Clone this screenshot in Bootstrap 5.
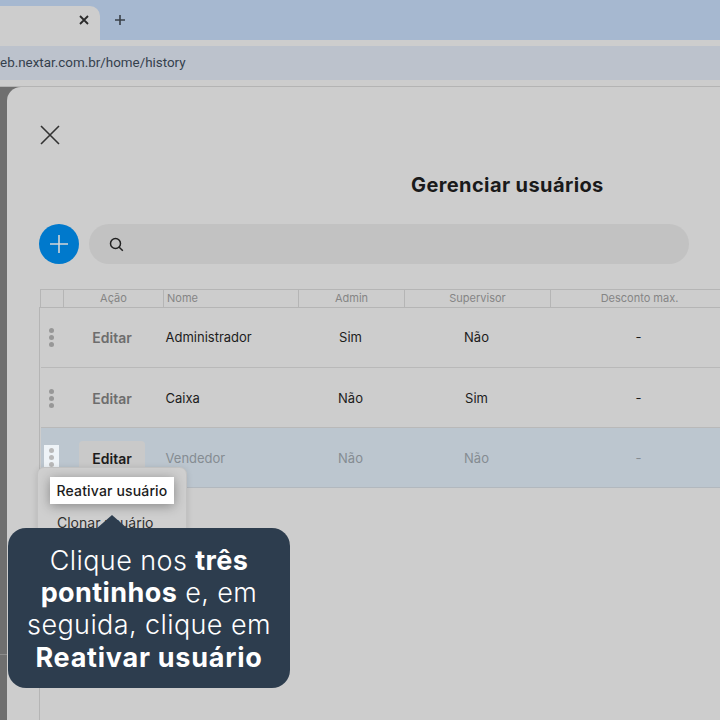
<!DOCTYPE html>
<html lang="pt-BR">
<head>
    <meta charset="UTF-8">
    <meta name="viewport" content="width=device-width, initial-scale=1.0">
    <title>Gerenciar usuários</title>
    <link href="https://cdn.jsdelivr.net/npm/bootstrap@5.3.0/dist/css/bootstrap.min.css" rel="stylesheet">
    <style>
        html, body { height: 720px; overflow: hidden; }
        body { background: #cdcdcd; font-family: "Inter", "Liberation Sans", sans-serif; color: #1c1c1c; }
        .abas { height: 40px; background: #a6b8d0; }
        .aba { width: 100px; height: 34px; margin-top: 6px; background: #cdcdcd; border-top-right-radius: 10px; padding: 0 10px 6px 0; }
        .aba-nova { width: 40px; }
        .barra-url { height: 34px; margin-top: 6px; background: #bcc2cc; font-family: "Roboto", "Liberation Sans", sans-serif; font-size: 13.4px; color: #34404c; line-height: 34px; white-space: nowrap; overflow: hidden; }
        .barra-url span { display: block; margin-left: -10px; }
        .fundo-janela { height: 640px; margin-top: 6px; border-top: 1px solid #b4b4b4; background: #6f6f6f; position: relative; }
        .fundo-linha { position: absolute; left: 0; top: 567px; width: 7px; height: 1px; background: #8c8c8c; }
        .janela { margin-left: 7px; height: 640px; background: #cdcdcd; border-top-left-radius: 14px; position: relative; padding: 38px 0 0 32px; overflow: hidden; }
        .fechar { margin-left: 1px; }
        .titulo { font-size: 20px; font-weight: 700; letter-spacing: .4px; color: #1a1a1a; margin: 0; padding: 29px 0 0 372px; line-height: 23px; }
        .busca-linha { margin-top: 27px; gap: 10px; }
        .btn-mais { width: 40px; height: 40px; background: #0079cc; border-radius: 50%; }
        .busca { width: 600px; height: 40px; background: #c2c2c2; border-radius: 20px; padding-left: 20px; }
        .grade { margin: 25px 0 0 1px; width: 688px; table-layout: fixed; border-collapse: collapse; font-size: 13px; }
        .grade th { height: 18px; padding: 0; font-size: 11px; font-weight: 400; color: #858585; text-align: center; border: 1px solid #b5b5b5; border-width: 1px 1px 1px 0; line-height: 15px; }
        .grade th:first-child { border-left-width: 1px; }
        .grade th.esq { text-align: left; padding-left: 3px; }
        .grade td { height: 60px; padding: 0 2px 0 0; text-align: center; vertical-align: middle; border-bottom: 1px solid #b9b9b9; background: transparent; color: #1c1c1c; }
        .grade tbody tr:nth-child(n+2) td { padding-top: 2px; }
        .grade td.esq { text-align: left; padding-left: 2px; padding-right: 0; }
        .grade tr.inativo td { background: #bcc6cf; color: #858c92; border-bottom-color: #b2b8be; }
        .grade tr.inativo td.forte { color: #1c1c1c; }
        .editar { font-size: 14px; font-weight: 600; color: #6d6d6d; display: inline-block; width: 66px; height: 34px; line-height: 34px; border-radius: 4px; margin-left: -1px; }
        .inativo .editar { background: #c9c9c9; color: #1c1c1c; height: 36px; line-height: 36px; }
        .pontos { display: inline-flex; flex-direction: column; gap: 2px; vertical-align: middle; }
        .pontos i { display: block; width: 5px; height: 5px; border-radius: 50%; background: #979797; }
        .regua { position: absolute; left: 32px; top: 220px; bottom: 0; width: 1px; background: #b5b5b5; }
        .pontos-ativo { position: absolute; left: 37px; top: 358px; width: 15px; height: 23px; background: #eef3f7; padding-top: 3px; overflow: hidden; }
        .pontos-ativo i { background: #b9b9b9; margin-left: 5px; }
        .menu-acoes { position: absolute; left: 30px; top: 380px; width: 150px; height: 90px; background: #cfcfcf; border: 1px solid #c2c2c2; border-radius: 7px; box-shadow: 0 1px 6px rgba(0,0,0,.12); font-size: 14px; padding: 9px 12px; }
        .menu-item { width: 124px; height: 27px; line-height: 27px; background: #fff; font-weight: 500; letter-spacing: .15px; color: #1c1c1c; text-align: center; box-shadow: 0 2px 12px rgba(0,0,0,.35); }
        .menu-clonar { color: #2e2e2e; padding: 7px 7px 0; line-height: 24px; white-space: nowrap; }
        .dica { position: absolute; left: 1px; top: 441px; width: 282px; height: 160px; background: #2d3d4e; border-radius: 18px; color: #fff; font-size: 27px; line-height: 32.2px; text-align: center; padding-top: 17px; letter-spacing: .4px; }
        .dica::before { content: ""; position: absolute; left: 88px; top: -13px; border-left: 16px solid transparent; border-right: 16px solid transparent; border-bottom: 14px solid #2d3d4e; }
        .dica b { font-weight: 700; }
        .dica b:last-child { letter-spacing: .75px; }
        .dica span { font-weight: 300; }
    </style>
</head>
<body>
    <div class="abas d-flex">
        <div class="aba d-flex align-items-center justify-content-end">
            <svg width="12" height="12" viewBox="0 0 12 12"><path d="M2 2l8 8M10 2l-8 8" stroke="#2a2a2a" stroke-width="1.8" fill="none"/></svg>
        </div>
        <div class="aba-nova d-flex align-items-center justify-content-center">
            <svg width="12" height="12" viewBox="0 0 12 12"><path d="M6 1v10M1 6h10" stroke="#3a4048" stroke-width="1.6" fill="none"/></svg>
        </div>
    </div>
    <div class="barra-url"><span>web.nextar.com.br/home/history</span></div>
    <div class="fundo-janela">
        <div class="fundo-linha"></div>
        <div class="janela">
            <svg class="d-block fechar" width="20" height="20" viewBox="0 0 20 20"><path d="M1 1l18 18M19 1L1 19" stroke="#333" stroke-width="1.6" fill="none"/></svg>
            <h1 class="titulo">Gerenciar usuários</h1>
            <div class="busca-linha d-flex">
                <div class="btn-mais d-flex align-items-center justify-content-center">
                    <svg width="20" height="20" viewBox="0 0 20 20"><path d="M10 1v18M1 10h18" stroke="#d5d5d5" stroke-width="1.6" fill="none"/></svg>
                </div>
                <div class="busca d-flex align-items-center">
                    <svg width="15" height="15" viewBox="0 0 15 15"><circle cx="6.5" cy="6.5" r="5" stroke="#222" stroke-width="1.5" fill="none"/><path d="M10.2 10.2l3.6 3.6" stroke="#222" stroke-width="1.5" fill="none"/></svg>
                </div>
            </div>
            <table class="grade">
                <colgroup><col style="width:23px"><col style="width:100px"><col style="width:135px"><col style="width:106px"><col style="width:146px"><col style="width:178px"></colgroup>
                <thead>
                    <tr><th></th><th>Ação</th><th class="esq">Nome</th><th>Admin</th><th>Supervisor</th><th>Desconto max.</th></tr>
                </thead>
                <tbody>
                    <tr><td><span class="pontos"><i></i><i></i><i></i></span></td><td><span class="editar">Editar</span></td><td class="esq">Administrador</td><td>Sim</td><td>Não</td><td>-</td></tr>
                    <tr><td><span class="pontos"><i></i><i></i><i></i></span></td><td><span class="editar">Editar</span></td><td class="esq">Caixa</td><td>Não</td><td>Sim</td><td>-</td></tr>
                    <tr class="inativo"><td></td><td class="forte"><span class="editar">Editar</span></td><td class="esq">Vendedor</td><td>Não</td><td>Não</td><td>-</td></tr>
                </tbody>
            </table>
            <div class="regua"></div>
            <div class="pontos-ativo pontos"><i></i><i></i><i></i></div>
            <div class="menu-acoes">
                <div class="menu-item">Reativar usuário</div>
                <div class="menu-clonar">Clonar usuário</div>
            </div>
            <div class="dica"><span>Clique nos </span><b>três pontinhos</b><span> e, em seguida, clique em </span><b>Reativar usuário</b></div>
        </div>
    </div>
</body>
</html>
